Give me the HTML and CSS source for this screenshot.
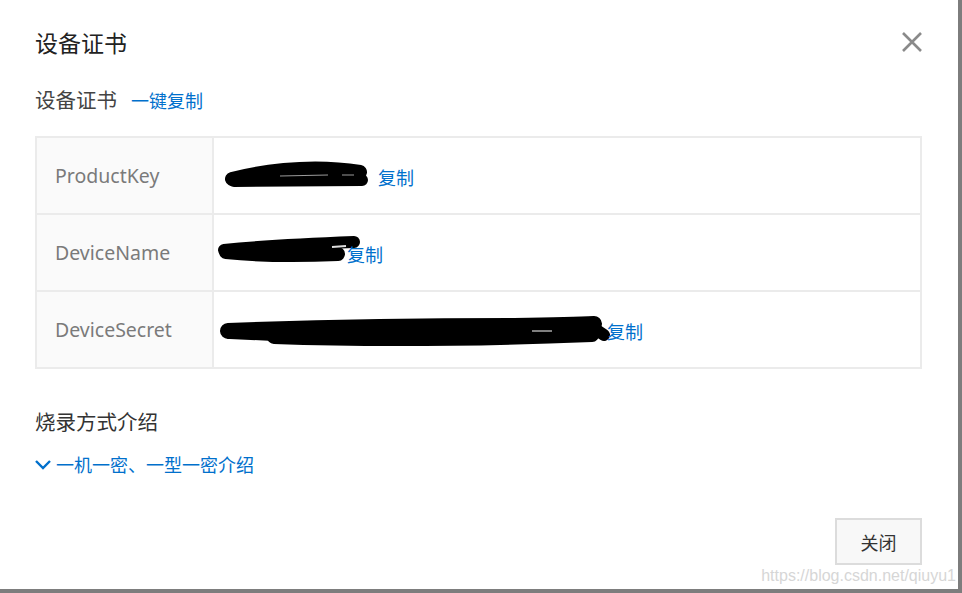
FILE: index.html
```html
<!DOCTYPE html>
<html lang="zh-CN">
<head>
    <meta charset="UTF-8">
    <title>设备证书</title>
    <link rel="stylesheet" href="styles.css">
</head>
<body>
    <div class="dialog">
        <div class="dialog-header">
            <h2 class="dialog-title">设备证书</h2>
            <button class="close-btn" title="关闭">
                <svg width="24" height="24" viewBox="0 0 24 24"><path d="M3 3 L21 21 M21 3 L3 21" stroke="#8a8a8a" stroke-width="2.6" fill="none"/></svg>
            </button>
        </div>

        <div class="sub-title">
            <span>设备证书</span>
            <a class="link copy-all">一键复制</a>
        </div>

        <div class="cert-table">
            <div class="cell label">ProductKey</div>
            <div class="cell value">
                <svg class="mask" width="164" height="28" viewBox="0 0 164 28">
                    <path d="M18 17 Q 40 11 70 8 Q 110 4 146 10" stroke="#000" stroke-width="14" stroke-linecap="round" fill="none"/>
                    <path d="M20 19 L 148 18" stroke="#000" stroke-width="12" stroke-linecap="round" fill="none"/>
                    <path d="M66 14 L 114 13 M 128 13 L 140 13" stroke="#9a9a9a" stroke-width="1.2" fill="none"/>
                </svg>
                <a class="link">复制</a>
            </div>

            <div class="cell label">DeviceName</div>
            <div class="cell value">
                <svg class="mask" width="133" height="30" viewBox="0 0 133 30">
                    <path d="M10 12 Q 60 7 140 4" stroke="#000" stroke-width="12" stroke-linecap="round" fill="none"/>
                    <path d="M12 14 Q 60 19 124 16" stroke="#000" stroke-width="14" stroke-linecap="round" fill="none"/>
                    <path d="M118 9 L 132 8" stroke="#ddd" stroke-width="2" fill="none"/>
                </svg>
                <a class="link">复制</a>
            </div>

            <div class="cell label">DeviceSecret</div>
            <div class="cell value">
                <svg class="mask" width="393" height="34" viewBox="0 0 393 34">
                    <path d="M14 18 Q 150 13 300 13 Q 360 12 380 11" stroke="#000" stroke-width="16" stroke-linecap="round" fill="none"/>
                    <path d="M60 24 Q 200 29 378 22" stroke="#000" stroke-width="14" stroke-linecap="round" fill="none"/>
                    <path d="M16 20 L 60 22 M 378 14 L 390 22" stroke="#000" stroke-width="12" stroke-linecap="round" fill="none"/>
                    <path d="M318 18 L 338 18" stroke="#aaa" stroke-width="1.5" fill="none"/>
                </svg>
                <a class="link">复制</a>
            </div>
        </div>

        <h3 class="section-title">烧录方式介绍</h3>
        <a class="link toggle">
            <svg width="18" height="14" viewBox="0 0 18 14"><path d="M2 3 L9 10 L16 3" stroke="#0070cc" stroke-width="2.4" fill="none"/></svg>
            一机一密、一型一密介绍
        </a>

        <div class="dialog-footer">
            <button class="btn">关闭</button>
        </div>

        <div class="watermark">https://blog.csdn.net/qiuyu1</div>
    </div>
</body>
</html>
```

FILE: styles.css
```css
body {
    margin: 0;
    background-color: #7d7d7d;
    font-family: "Noto Sans", "Noto Sans CJK SC", sans-serif;
    height: 593px;
    overflow: hidden;
}

.dialog {
    position: relative;
    width: 958px;
    height: 589px;
    box-sizing: border-box;
    padding: 0 36px 24px 35px;
    background-color: #fff;
    display: flex;
    flex-direction: column;
}

.dialog-header {
    height: 85px;
    display: flex;
    justify-content: space-between;
    align-items: center;
}

.dialog-title {
    margin: 0;
    font-size: 23px;
    font-weight: 400;
    color: #222;
    line-height: 30px;
}

.close-btn {
    width: 24px;
    height: 24px;
    padding: 0;
    margin-right: -2px;
    margin-top: -2px;
    border: none;
    background: none;
    cursor: pointer;
}

.close-btn svg {
    display: block;
}

.sub-title {
    display: flex;
    align-items: center;
    height: 28px;
    font-size: 20.5px;
    color: #444;
}

.link {
    color: #0070cc;
    cursor: pointer;
    font-size: 18px;
}

.copy-all {
    margin-left: 14px;
    margin-top: 2px;
}

.cert-table {
    margin-top: 23px;
    display: grid;
    grid-template-columns: 175px 1fr;
    grid-auto-rows: 75px;
    gap: 2px;
    border: 2px solid #ebebeb;
    background-color: #ebebeb;
}

.cell {
    display: flex;
    align-items: center;
    background-color: #fff;
}

.label {
    background-color: #fafafa;
    padding-left: 18px;
    font-size: 19.5px;
    color: #7a7a7a;
}

.value {
    padding: 0;
}

.mask {
    display: block;
    overflow: visible;
    flex-shrink: 0;
}

.value .link {
    position: relative;
    margin-top: 2px;
}

.section-title {
    margin: 39px 0 0;
    font-size: 20.5px;
    font-weight: 400;
    line-height: 28px;
    color: #333;
}

.toggle {
    margin-top: 17px;
    display: flex;
    align-items: center;
    gap: 4px;
    line-height: 24px;
}

.toggle svg {
    display: block;
    margin-left: -1px;
}

.dialog-footer {
    margin-top: auto;
    display: flex;
    justify-content: flex-end;
}

.btn {
    width: 87px;
    height: 47px;
    border: 2px solid #dcdcdc;
    background-color: #f8f8f8;
    font-family: "Noto Sans CJK SC", sans-serif;
    font-size: 18px;
    color: #333;
    cursor: pointer;
}

.watermark {
    position: absolute;
    right: 2px;
    bottom: 4px;
    font-family: "Liberation Sans", sans-serif;
    font-size: 16px;
    color: #d6d6d6;
}
```
